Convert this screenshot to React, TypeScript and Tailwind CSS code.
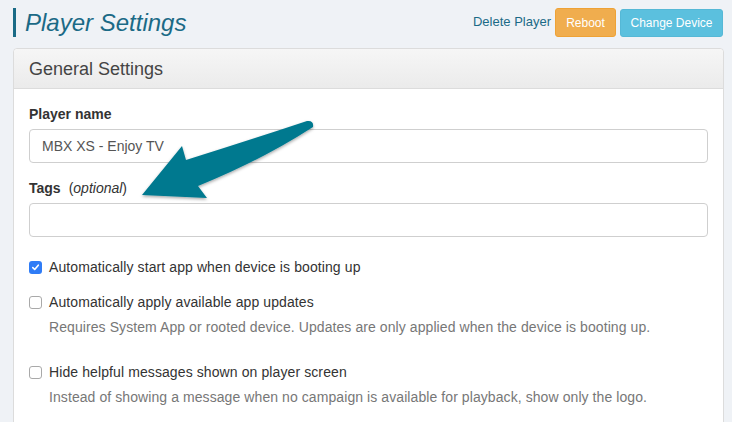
import React from "react";

const Check = ({ checked }: { checked?: boolean }) =>
  checked ? (
    <span className="w-[13px] h-[13px] rounded-[3px] bg-[#2f7cf6] flex items-center justify-center shrink-0">
      <svg width="9" height="9" viewBox="0 0 9 9">
        <path d="M1.8 4.6 L3.7 6.5 L7.3 2.2" stroke="white" strokeWidth="1.6" fill="none" strokeLinecap="round" strokeLinejoin="round" />
      </svg>
    </span>
  ) : (
    <span className="w-[13px] h-[13px] rounded-[3px] border border-[#a9a9a9] bg-white shrink-0" />
  );

const Option = ({
  label,
  help,
  checked,
  className,
}: {
  label: string;
  help?: string;
  checked?: boolean;
  className?: string;
}) => (
  <div className={className}>
    <div className="flex items-center h-[20px] gap-[7px]">
      <Check checked={checked} />
      <span className="text-[#333] tracking-[0.1px]">{label}</span>
    </div>
    {help && <p className="mt-[5px] h-[20px] leading-[20px] pl-[20px] text-[#777] tracking-[0.08px]">{help}</p>}
  </div>
);

export default function App() {
  return (
    <div className="relative w-[732px] h-[422px] overflow-hidden bg-[#eff2f6] font-['Liberation_Sans',Arial,sans-serif] text-[14px] leading-[20px]">
      {/* Title bar */}
      <div className="flex items-start justify-between pl-[13px] pr-[9px] pt-[8px]">
        <h1 className="border-l-[3px] border-[#1a6b86] pl-[9px] h-[29px] flex items-center italic text-[24px] text-[#1b6a86]">
          Player Settings
        </h1>
        <div className="flex items-center gap-[4px]">
          <a className="text-[13px] text-[#1b6a86] -mt-[1px]">Delete Player</a>
          <button className="h-[29px] w-[61px] rounded-[3px] bg-[#f0ad4e] border border-[#eea236] text-white text-[12px]">
            Reboot
          </button>
          <button className="h-[28px] w-[103px] mt-[1px] rounded-[3px] bg-[#5bc0de] border border-[#55b8d6] text-white text-[12px]">
            Change Device
          </button>
        </div>
      </div>

      {/* Panel */}
      <div className="mt-[11px] ml-[13px] w-[711px] rounded-t-[4px] border border-[#dcdcdc] bg-white h-[400px]">
        <div className="h-[40px] flex items-center px-[15px] bg-gradient-to-b from-[#f6f6f6] to-[#ebebeb] border-b border-[#dcdcdc] rounded-t-[4px]">
          <h2 className="text-[18px] text-[#444]">General Settings</h2>
        </div>
        <div className="pt-[15px] px-[15px]">
          <label className="block font-bold text-[#333]">Player name</label>
          <div className="mt-[5px] h-[34px] w-[679px] rounded-[4px] border border-[#cfcfcf] flex items-center px-[12px] text-[#555]">
            MBX XS - Enjoy TV
          </div>
          <label className="block mt-[15px] text-[#333]">
            <span className="font-bold">Tags</span>
            <span className="ml-[8px]">
              (<i>optional</i>)
            </span>
          </label>
          <div className="mt-[5px] h-[34px] w-[679px] rounded-[4px] border border-[#cfcfcf]" />

          <Option className="mt-[20px]" checked label="Automatically start app when device is booting up" />
          <Option
            className="mt-[15px]"
            label="Automatically apply available app updates"
            help="Requires System App or rooted device. Updates are only applied when the device is booting up."
          />
          <Option
            className="mt-[25px]"
            label="Hide helpful messages shown on player screen"
            help="Instead of showing a message when no campaign is available for playback, show only the logo."
          />
        </div>
      </div>

      {/* Annotation arrow */}
      <svg className="absolute left-0 top-0 pointer-events-none" width="732" height="422" viewBox="0 0 732 422">
        <defs>
          <filter id="sh" x="-20%" y="-20%" width="140%" height="140%">
            <feDropShadow dx="0" dy="1.5" stdDeviation="1.5" floodColor="#000" floodOpacity="0.35" />
          </filter>
        </defs>
        <path
          d="M142 195 L182 146 L186 160 Q250 140 307 121 Q314 120 313 127 Q262 160 198 186 L207 198 Z"
          fill="#06798f"
          filter="url(#sh)"
        />
      </svg>
    </div>
  );
}
